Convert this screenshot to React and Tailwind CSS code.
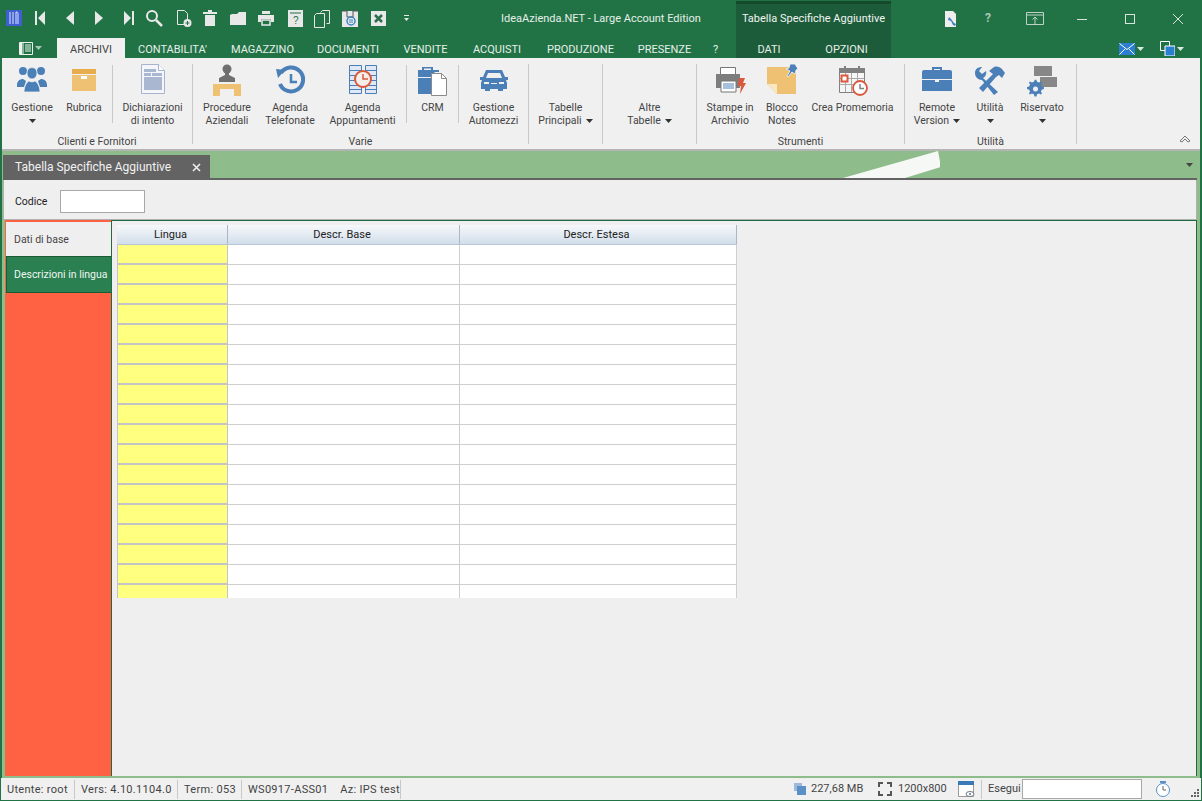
import React from "react";

const W = "#e8e8e8";
const B = "#4a7fb8";
const O = "#eec173";
const G = "#808080";
const R = "#d9593d";

const S = ({ w = 20, h = 20, className = "", children }) => (
  <svg width={w} height={h} viewBox={`0 0 ${w} ${h}`} className={`shrink-0 ${className}`}>{children}</svg>
);

const Caret = ({ c = "#333", className = "" }) => (
  <svg width="7" height="4" viewBox="0 0 7 4" className={className}><path d="M0 0h7L3.5 4z" fill={c} /></svg>
);

const tools = [
  [42, <path d="M3 3h2v14H3zM13 3v14L6 10z" fill={W} />],
  [70, <path d="M14 3v14L6 10z" fill={W} />],
  [99, <path d="M6 3v14l8-7z" fill={W} />],
  [127, <path d="M15 3h2v14h-2zM7 3v14l7-7z" fill={W} />],
  [154, <g fill="none" stroke={W}><circle cx="8" cy="8" r="5" strokeWidth="2" /><path d="M12 12l6 6" strokeWidth="2.5" /></g>],
  [183, <g><path d="M4.500 2.500h7l3 3v11h-10z" fill="none" stroke={W} /><circle cx="14.500" cy="15" r="4" fill={W} /><path d="M12.500 15h4M14.500 13v4" stroke="#217346" /></g>],
  [210, <path d="M8 2h4v2h5v2H3V4h5zM5 7h10v11H5z" fill={W} />],
  [238, <path d="M2 7l2-1h5l2-2h7v13H2z" fill={W} />],
  [266, <g><path d="M6 3h8v3H6zM2 7h16v7h-3v-3H5v3H2z" fill={W} /><path d="M6 12h8v5H6z" fill="none" stroke={W} strokeWidth="1.500" /></g>],
  [295, <g><path d="M3 2h15v17H3z" fill={W} /><path d="M5 5h11" stroke="#217346" /><text x="8" y="16" fontSize="10" fill="#217346" fontFamily="Liberation Sans">?</text></g>],
  [322, <g fill="none" stroke={W}><path d="M8.500 4.500l2-2h7v13h-3" /><path d="M2.500 7.500l2-2h8v14h-10z" /></g>],
  [350, <g><path d="M2 3h16v16H2z" fill={W} /><path d="M2 3h5v6h6V3h5" stroke="#555" fill="none" /><circle cx="11" cy="13" r="4" fill="none" stroke="#3d85c6" strokeWidth="1.500" /><path d="M9 12h4M9 14h4" stroke="#3d85c6" /></g>],
  [378, <g><path d="M3 3h15v15H3z" fill={W} /><path d="M7 7l7 7M14 7l-7 7" stroke="#2c6e49" strokeWidth="2.500" /></g>],
  [408, <g fill={W}><path d="M6 7h5v1H6zM6 10h5l-2.500 3z" /></g>],
];

const ribbonIcons = {
  gestione: (
    <g fill={B}>
      <circle cx="8" cy="7" r="4" /><circle cx="26" cy="7" r="4" />
      <path d="M2 21c0-4 3-6 6-6l3 2-2 6H2zM32 21c0-4-3-6-6-6l-3 2 2 6h7z" />
      <path d="M17 3.500c3.500 0 5 2.500 5 5.500s-2 6-5 6-5-3-5-6 1.500-5.500 5-5.500zM9 28c0-6 3-10 5-11l3 1 3-1c2 1 5 5 5 11z" stroke="#f0f0f0" strokeWidth=".8" />
    </g>
  ),
  rubrica: (
    <g>
      <path d="M5 5h24v5H5z" fill="#e8ad4d" /><path d="M5 11h24v16H5z" fill={O} /><path d="M14 12h6v3h-6z" fill="#fff" />
    </g>
  ),
  dich: (
    <g>
      <path d="M5.500.5h17l6 6v23h-23z" fill="#f4f6fb" stroke="#a9b4cc" />
      <path d="M22.500.5v6h6" fill="#fff" stroke="#a9b4cc" />
      <path d="M8 5h12v3H8zM8 9h7v3H8zM16 9h10v3H16zM8 13h18v13H8z" fill="#a9b7d1" />
    </g>
  ),
  proc: (
    <g>
      <circle cx="17" cy="5" r="4.500" fill="#6f6f6f" /><path d="M15 9h4v2l6 3v4H9v-4l6-3z" fill="#6f6f6f" />
      <path d="M3 20h28v12h-7v-7H10v7H3z" fill={O} />
    </g>
  ),
  agT: (
    <g fill="none" stroke={B}>
      <path d="M8 9a12 12 0 1 1-1 11" strokeWidth="4" />
      <path d="M3 5l9 1-7 8z" fill={B} stroke="none" />
      <path d="M18 10v8h6" stroke="#4a7fb8" strokeWidth="2.500" />
    </g>
  ),
  agA: (
    <g>
      <g fill="#dfe8f4" stroke={B}>
        <path d="M3.500 1.500h12v28h-12zM19.500 1.500h11v28h-11z" />
        <path d="M3.500 6.500h12M3.500 11.500h12M3.500 16.500h12M3.500 21.500h12M3.500 25.500h12M19.500 6.500h11M19.500 11.500h11M19.500 16.500h11M19.500 21.500h11M19.500 25.500h11" fill="none" />
      </g>
      <circle cx="17" cy="15" r="8" fill="#f6efe9" stroke={R} strokeWidth="2" />
      <path d="M17 10v5h5" stroke={R} fill="none" strokeWidth="1.500" />
    </g>
  ),
  crm: (
    <g>
      <path d="M6 6V3h11v3h6v2h-4.500v22H2V6z" fill={B} />
      <path d="M8 4.500h7V6H8z" fill="#f0f0f0" /><path d="M2 13h16v1H2z" fill="#f0f0f0" />
      <path d="M15.500 9.500h10l5 5v17h-15z" fill="#fff" stroke="#8a8a8a" />
      <path d="M25.500 9.500v5h5" fill="none" stroke="#8a8a8a" />
    </g>
  ),
  car: (
    <g fill={B}>
      <path d="M9 6h16l3 7h3v3h-2l1 3v6h-4v2h-5v-2H13v2H8v-2H4v-6l1-3H3v-3h3z" />
      <path d="M11 9h12l2 5H9z" fill="#f0f0f0" />
      <path d="M7 18h5v2H7zM22 18h5v2h-5zM14 19h6v1h-6z" fill="#f0f0f0" />
    </g>
  ),
  stampe: (
    <g>
      <path d="M7.500 3.500h15v7h-15z" fill="#fff" stroke="#777" />
      <path d="M3 10h24v14H3z" fill="#7d7d7d" />
      <path d="M8 17h15v11H8z" fill="#fff" stroke="#777" />
      <path d="M10 20h11M10 22h11M10 24h11" stroke={B} strokeWidth="1" />
      <path d="M26 14h6l-2 5h3l-6 11 1-8h-3z" fill={R} />
    </g>
  ),
  blocco: (
    <g>
      <path d="M2 3h29v27H12L2 20z" fill={O} />
      <path d="M2 20h10v10z" fill="#f9e6c4" />
      <path d="M25 0h5l3 5-2 1-1 4-3-2-4 5-1-1 3-5-4-2 3-1z" fill={B} stroke="#f7f7f7" strokeWidth=".8" />
    </g>
  ),
  crea: (
    <g>
      <path d="M3.500 4.500h25v24h-25z" fill="#f6f6f6" stroke={G} />
      <path d="M3 4h26v5H3z" fill={G} /><path d="M8 2h2v5H8zM22 2h2v5h-2z" fill={G} />
      <path d="M3.500 14.500h25M3.500 20.500h25M9.500 9v19M15.500 9v19M21.500 9v19" stroke="#a8a8a8" fill="none" />
      <path d="M5.500 11.500h6v6h-6z" fill="#fff" stroke={R} strokeWidth="2" />
      <circle cx="24" cy="24" r="7" fill="#fff" stroke={R} strokeWidth="1.800" />
      <path d="M24 20v4.500h4" fill="none" stroke={G} strokeWidth="1.500" />
    </g>
  ),
  remote: (
    <g fill={B}>
      <path d="M12 6V3h10v3h8a2 2 0 0 1 2 2v7H2V8a2 2 0 0 1 2-2zM14 5v1h6V5zM2 16h13v2h4v-2h13v11H2z" />
    </g>
  ),
  utilita: (
    <g fill={B}>
      <path d="M2 9c0-4 3-6 7-6l-3 4 3 3 4-3c1 3-1 6-3 7l15 14-4 3L9 16c-4 0-7-3-7-7z" />
      <path d="M16 7l5-4c3-1 6 0 8 2l3 4-3 5-3-3-3 2L10 28l-4-4 14-14z" />
    </g>
  ),
  ris: (
    <g>
      <path d="M9 2h18v10H9zM15 13h17v10H15z" fill="#878787" />
      <path d="M11 17l1.500 0 .8 2.200 2 .8 2-1 1 1-1 2 .8 2 2.200.6v2l-2.200.6-.8 2 1 2-1 1-2-1-2 .8-.6 2.200h-2l-.6-2.200-2-.8-2 1-1-1 1-2-.8-2-2.200-.6v-2l2.200-.6.8-2-1-2 1-1 2 1 2-.8z" fill={B} transform="translate(-1 -1) scale(.98)" />
      <circle cx="10.500" cy="25" r="2.500" fill="#f0f0f0" />
    </g>
  ),
};

const Btn = ({ w, icon, l1, l2 }) => (
  <div className="flex flex-col items-center" style={{ width: w }}>
    <div className="h-[37px] flex justify-center">
      <S w={34} h={34}>{ribbonIcons[icon]}</S>
    </div>
    <div className="h-[13px] leading-[13px] whitespace-nowrap">{l1}</div>
    <div className="h-[13px] leading-[13px] whitespace-nowrap">{l2}</div>
  </div>
);

const TextBtn = ({ w, l1, l2 }) => (
  <div className="flex flex-col items-center pt-[37px]" style={{ width: w }}>
    <div className="h-[13px] leading-[13px] whitespace-nowrap">{l1}</div>
    <div className="h-[13px] leading-[13px] whitespace-nowrap flex items-center gap-[4px]">{l2}<Caret /></div>
  </div>
);

const DownBtn = ({ w, icon, label }) => (
  <div className="flex flex-col items-center" style={{ width: w }}>
    <div className="h-[37px] flex justify-center"><S w={34} h={34}>{ribbonIcons[icon]}</S></div>
    <div className="h-[13px] leading-[13px] whitespace-nowrap">{label}</div>
    <div className="h-[13px] flex items-center justify-center"><Caret /></div>
  </div>
);

const SmallSep = () => <div className="w-px h-[58px] bg-[#c8c8c8] mt-[1px] shrink-0" />;

const Group = ({ w, label, children }) => (
  <div className="flex shrink-0" style={{ width: w }}>
    <div className="flex-1 flex flex-col">
      <div className="flex h-[71px] pt-[6px] box-content">{children}</div>
      <div className="h-[14px] leading-[14px] text-center">{label}</div>
    </div>
    <div className="w-px h-[80px] bg-[#c8c8c8] mt-[6px]" />
  </div>
);

const menu = [
  ["CONTABILITA'", 95], ["MAGAZZINO", 85], ["DOCUMENTI", 86], ["VENDITE", 69],
  ["ACQUISTI", 74], ["PRODUZIONE", 93], ["PRESENZE", 75], ["?", 27],
];

const StatusCell = ({ w, children }) => (
  <div className="h-[19px] leading-[19px] pl-[6px] whitespace-nowrap tracking-[0.3px] border-r border-[#c8c8c8]" style={{ width: w }}>{children}</div>
);

export default function App() {
  return (
    <div
      className="w-[1202px] h-[801px] overflow-hidden bg-[#217346] flex flex-col text-[11px] text-[#444] relative"
      style={{ fontFamily: 'Roboto, "Noto Sans", sans-serif' }}
    >
      <div className="flex h-[38px] shrink-0 pt-[1px] text-[#e6efe9]">
        <div className="w-[736px] relative">
          <div className="absolute left-[6px] top-[9px] w-[16px] h-[16px] bg-[#3f5fd0] flex items-center justify-center">
            <svg width="12" height="14" viewBox="0 0 12 14"><path d="M2 1v12M5 1v12M8 1c2 0 2 1 2 2v10M8 1v12" fill="none" stroke="#dfe6ff" strokeWidth="1" /></svg>
          </div>
          {tools.map(([cx, el]) => (
            <svg key={cx} width="20" height="20" viewBox="0 0 20 20" className="absolute top-[7px]" style={{ left: cx - 10 }}>{el}</svg>
          ))}
          <div className="absolute left-[501px] top-[10px] text-[11px] leading-[16px] whitespace-nowrap">IdeaAzienda.NET - Large Account Edition</div>
        </div>
        <div className="w-[155px] bg-[#1d5c3a] border-t-[3px] border-[#164a2d] text-center leading-[30px] whitespace-nowrap text-[#f0f5f1]">Tabella Specifiche Aggiuntive</div>
        <div className="flex-1 relative">
          <svg width="16" height="18" viewBox="0 0 16 18" className="absolute left-[52px] top-[9px]">
            <path d="M2 1h8l3 3v13H2z" fill="#eee" /><path d="M6 7l2 2 3 4 2 1-1 2-2-1-2-4-3-1z" fill="#3d7fc4" />
          </svg>
          <div className="absolute left-[94px] top-[9px] text-[12px] font-bold text-[#a9c7b5] leading-[16px]">?</div>
          <svg width="18" height="14" viewBox="0 0 18 14" className="absolute left-[135px] top-[11px]">
            <path d="M.5.500h17v12H.5zM1 3h16M9 12V5M6.500 7.500L9 5l2.500 2.500" fill="none" stroke="#bcd3c5" />
          </svg>
          <div className="absolute left-[186px] top-[18px] w-[10px] h-px bg-[#d7e5dc]" />
          <div className="absolute left-[234px] top-[13px] w-[10px] h-[10px] border border-[#d7e5dc]" />
          <svg width="12" height="12" viewBox="0 0 12 12" className="absolute left-[281px] top-[12px]">
            <path d="M1 1l10 10M11 1L1 11" stroke="#d7e5dc" />
          </svg>
        </div>
      </div>

      <div className="flex h-[20px] shrink-0 items-stretch text-[#e6efe9] leading-[23px] whitespace-nowrap">
        <div className="w-[57px] pl-[19px] flex items-center gap-[2px]">
          <svg width="14" height="13" viewBox="0 0 14 13"><path d="M.5.500h13v12H.5zM4 .5v12M6 3h6M6 5h6M6 7h6M6 9h6" fill="none" stroke="#eef3f0" /><path d="M1 1h2v11H1z" fill="#eef3f0" /></svg>
          <Caret c="#a9c7b5" />
        </div>
        <div className="w-[68px] bg-[#f0f0f0] text-[#444] text-center">ARCHIVI</div>
        {menu.map(([t, w]) => <div key={t} className="text-center" style={{ width: w }}>{t}</div>)}
        <div className="w-[7px]" />
        <div className="w-[66px] bg-[#1d5c3a] text-center">DATI</div>
        <div className="w-[89px] bg-[#1d5c3a] text-center">OPZIONI</div>
        <div className="flex-1 relative">
          <svg width="18" height="12" viewBox="0 0 18 12" className="absolute left-[228px] top-[5px]"><path d="M0 0h16v12H0z" fill="#2a7fd0" /><path d="M.5.500l7.500 6 7.500-6M.5 11.500L6 6M15.500 11.500L10 6" fill="none" stroke="#fff" /></svg>
          <Caret c="#dfe9e3" className="absolute left-[246px] top-[9px]" />
          <svg width="15" height="15" viewBox="0 0 15 15" className="absolute left-[269px] top-[3px]"><path d="M.5.500h9v9h-9z" fill="none" stroke="#fff" /><path d="M5 5h10v10H5z" fill="#2a7fd0" stroke="#fff" /></svg>
          <Caret c="#dfe9e3" className="absolute left-[286px] top-[9px]" />
        </div>
      </div>

      <div className="mx-[2px] h-[93px] shrink-0 bg-[#f0f0f0] border-b-2 border-[#b4b4b4] flex relative text-[10.5px]">
        <Group w={191} label="Clienti e Fornitori">
          <div className="w-[4px]" />
          <DownBtn w={52} icon="gestione" label="Gestione" />
          <Btn w={52} icon="rubrica" l1="Rubrica" />
          <div className="w-[2px]" />
          <SmallSep />
          <Btn w={79} icon="dich" l1="Dichiarazioni" l2="di intento" />
        </Group>
        <Group w={336} label="Varie">
          <Btn w={68} icon="proc" l1="Procedure" l2="Aziendali" />
          <Btn w={58} icon="agT" l1="Agenda" l2="Telefonate" />
          <Btn w={87} icon="agA" l1="Agenda" l2="Appuntamenti" />
          <SmallSep />
          <Btn w={51} icon="crm" l1="CRM" />
          <SmallSep />
          <Btn w={69} icon="car" l1="Gestione" l2="Automezzi" />
        </Group>
        <Group w={74}><TextBtn w={73} l1="Tabelle" l2="Principali" /></Group>
        <Group w={94}><TextBtn w={93} l1="Altre" l2="Tabelle" /></Group>
        <Group w={208} label="Strumenti">
          <Btn w={66} icon="stampe" l1="Stampe in" l2="Archivio" />
          <Btn w={38} icon="blocco" l1="Blocco" l2="Notes" />
          <Btn w={103} icon="crea" l1="Crea Promemoria" />
        </Group>
        <Group w={172} label="Utilità">
          <div className="flex-col flex items-center w-[64px]">
            <div className="h-[37px]"><S w={34} h={34}>{ribbonIcons.remote}</S></div>
            <div className="h-[13px] leading-[13px]">Remote</div>
            <div className="h-[13px] leading-[13px] flex items-center gap-[4px]">Version<Caret /></div>
          </div>
          <DownBtn w={42} icon="utilita" label="Utilità" />
          <DownBtn w={62} icon="ris" label="Riservato" />
        </Group>
        <svg width="12" height="8" viewBox="0 0 12 8" className="absolute left-[1177px] top-[77px]">
          <path d="M1 6l5-5 5 5-2 1-3-3-3 3z" fill="none" stroke="#777" />
        </svg>
      </div>

      <div className="mx-[2px] flex-1 bg-[#8fbc8b] flex flex-col pl-[1px] pr-[3px] pb-[2px] relative min-h-0">
        <svg width="100" height="28" viewBox="0 0 100 28" className="absolute left-[838px] top-0">
          <path d="M3 27L98 0l3 16-36 11z" fill="#f6f8f5" />
        </svg>
        <Caret c="#444" className="absolute left-[1184px] top-[12px]" />

        <div className="h-[27px] shrink-0 flex items-end">
          <div className="w-[207px] h-[23px] bg-[#636363] text-[#f2f2f2] text-[12px] leading-[25px] pl-[12px] flex justify-between pr-[9px]">
            <span>Tabella Specifiche Aggiuntive</span>
            <svg width="9" height="9" viewBox="0 0 9 9" className="mt-[8px]"><path d="M1 1l7 7M8 1L1 8" stroke="#eee" strokeWidth="1.600" /></svg>
          </div>
        </div>

        <div className="flex-1 flex flex-col min-h-0 border-t-2 border-[#636363]">
          <div className="h-[40px] shrink-0 bg-[#efefef] border-x border-b border-[#b0b0b0] flex items-center pl-[11px] pt-[4px] text-[#222] text-[10.5px]">
            <span className="w-[45px] pt-[1px]">Codice</span>
            <div className="w-[85px] h-[23px] bg-white border border-[#a8a8a8]" />
          </div>
          <div className="flex-1 flex min-h-0 pl-[2px]">
            <div className="w-[107px] shrink-0 bg-[#ff6242] border-r-[1px] border-[#1f6b42] pt-[1px] flex flex-col text-[10.5px]">
              <div className="h-[35px] ml-[1px] bg-[#efefef] leading-[35px] pl-[8px] border-t border-[#ff6242] text-[#444]">Dati di base</div>
              <div className="h-[37px] ml-[1px] bg-[#2a8050] border border-[#1a5a36] border-r-0 leading-[35px] pl-[7px] text-[#eef5f0] whitespace-nowrap">Descrizioni in lingua</div>
            </div>
            <div className="flex-1 bg-[#efefef] border-t border-r border-[#1f6b42] pl-[5px] pt-[4px] min-w-0">
              <div className="w-[620px] h-[373px] overflow-hidden">
                <div className="flex h-[20px] text-[#222] bg-gradient-to-b from-[#f6f8fb] to-[#d2deea] border-b border-[#b8c6d6] leading-[20px] text-center">
                  <div className="w-[111px] border-r border-[#a9b7c8] pr-[3px]">Lingua</div>
                  <div className="w-[232px] border-r border-[#a9b7c8] pr-[3px]">Descr. Base</div>
                  <div className="w-[277px] border-r border-[#a9b7c8] pr-[3px]">Descr. Estesa</div>
                </div>
                {Array.from({ length: 18 }).map((_, i) => (
                  <div key={i} className="flex h-[20px]">
                    <div className="w-[111px] bg-[#ffff80] border-l border-r border-b-2 border-[#c4c4c4]" />
                    <div className="w-[232px] bg-white border-r border-b border-[#cfcfcf]" />
                    <div className="w-[277px] bg-white border-r border-b border-[#cfcfcf]" />
                  </div>
                ))}
              </div>
            </div>
          </div>
        </div>
      </div>

      <div className="mx-[1px] mb-[1px] h-[22px] shrink-0 bg-[#f0f0f0] flex items-center text-[#444]">
        <StatusCell w={74}>Utente: root</StatusCell>
        <StatusCell w={103}>Vers: 4.10.1104.0</StatusCell>
        <StatusCell w={64}>Term: 053</StatusCell>
        <StatusCell w={159}>
          <span>WS0917-ASS01</span><span className="ml-[12px]">Az: IPS test</span>
        </StatusCell>
        <div className="w-[392px]" />
        <svg width="14" height="14" viewBox="0 0 14 14"><path d="M1 1h8v8H1z" fill="#9db8d8" /><path d="M4 4h9v9H4z" fill="#5b8fc7" /></svg>
        <div className="w-[71px] pl-[4px] whitespace-nowrap">227,68 MB</div>
        <svg width="14" height="14" viewBox="0 0 14 14"><path d="M1 5V1h4M9 1h4v4M13 9v4H9M5 13H1V9" fill="none" stroke="#555" strokeWidth="2" /></svg>
        <div className="w-[66px] pl-[6px] whitespace-nowrap">1200x800</div>
        <svg width="17" height="17" viewBox="0 0 17 17"><path d="M.5.500h15v15H.5z" fill="#fff" stroke="#999" /><path d="M0 0h16v4H0z" fill="#3b78b8" /><ellipse cx="12" cy="13" rx="4" ry="2.500" fill="#fff" stroke="#777" /><circle cx="12" cy="13" r="1" fill="#3b78b8" /></svg>
        <div className="w-px h-[19px] bg-[#c8c8c8] ml-[6px]" />
        <div className="w-[40px] pl-[6px]">Esegui</div>
        <div className="w-[120px] h-[20px] bg-white border border-[#a8a8a8]" />
        <svg width="16" height="18" viewBox="0 0 16 18" className="ml-[13px]"><circle cx="8" cy="10" r="6.500" fill="#fff" stroke="#5b8fc7" /><path d="M5 1h6v2H5z" fill="#5b8fc7" /><path d="M8 6v4h3" fill="none" stroke="#666" /></svg>
        <svg width="9" height="9" viewBox="0 0 9 9" className="ml-[20px] mt-[9px]"><path d="M6 0h2v2H6zM3 3h2v2H3zM6 3h2v2H6zM0 6h2v2H0zM3 6h2v2H3zM6 6h2v2H6z" fill="#666" /></svg>
      </div>
    </div>
  );
}
